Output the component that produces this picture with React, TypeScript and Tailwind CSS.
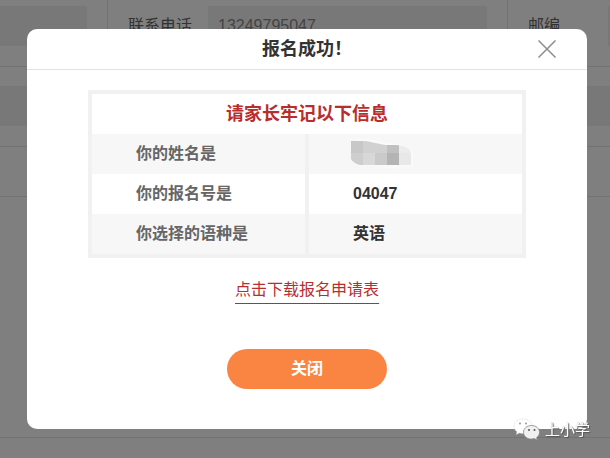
import { useState } from "react";

type Row = {
  label: string;
  value?: string;
};

const rows: Row[] = [
  { label: "你的姓名是" },
  { label: "你的报名号是", value: "04047" },
  { label: "你选择的语种是", value: "英语" },
];

// pixelated block that hides the name
const HiddenName: React.FC = () => (
  <svg
    width="66"
    height="32"
    viewBox="0 0 66 32"
    role="img"
    aria-label="姓名"
    className="block"
    shapeRendering="crispEdges"
  >
    <clipPath id="name-shape">
      <path d="M2 3H17L36 7H48C56 8 62 10 62 16V27H11Q4 25 2 21Z" />
    </clipPath>
    <path
      d="M6 1H18L42 5Q64 7 64 18V28L44 31L28 28H12Z"
      fill="#fafafa"
      shapeRendering="auto"
    />
    <g clipPath="url(#name-shape)">
      <path d="M2 3h12v12H2z" fill="#c8c8c8" />
      <path d="M14 3h24v12H14z" fill="#d1d1d1" />
      <path d="M38 3h12v12H38z" fill="#c0c0c0" />
      <path d="M50 3h12v12H50z" fill="#ececec" />
      <path d="M2 15h12v12H2z" fill="#cecece" />
      <path d="M14 15h12v12H14z" fill="#d8d8d8" />
      <path d="M26 15h12v12H26z" fill="#cacaca" />
      <path d="M38 15h12v12H38z" fill="#b4b4b4" />
      <path d="M50 15h12v12H50z" fill="#e8e8e8" />
    </g>
  </svg>
);

const Watermark: React.FC = () => (
  <div className="pointer-events-none fixed right-5 bottom-4 flex items-center gap-1">
    <svg width="28" height="24" viewBox="0 0 28 24" aria-hidden="true">
      <path
        d="M10 1C4.500 1 1 4.200 1 8.200c0 2.300 1.200 4.200 3 5.500l-.8 2.800 3.200-1.600c1.200.4 2.400.5 3.600.5 5 0 9-3.200 9-7.200S15 1 10 1z"
        fill="#fff"
        stroke="#ccc"
        strokeWidth="0.8"
        strokeDasharray="1 1.500"
      />
      <path
        d="M18.500 7.500c-4.700 0-8 3-8 6.800s3.300 6.800 8 6.800c1 0 2-.2 2.900-.5l2.900 1.500-.7-2.500c1.800-1.300 2.900-3.100 2.900-5.300 0-3.800-3.300-6.800-8-6.800z"
        fill="#f0f0f0"
        stroke="#888"
        strokeWidth="0.8"
      />
      <circle cx="7" cy="5.500" r="1" fill="#999" />
      <circle cx="13" cy="5.500" r="1" fill="#999" />
      <circle cx="16" cy="12" r="1" fill="#555" />
      <circle cx="21.500" cy="12" r="1" fill="#555" />
    </svg>
    <span className="text-[15px] leading-5 text-white [text-shadow:1px_1px_1px_#555,0_0_1px_#888]">
      上小学
    </span>
  </div>
);

const App: React.FC = () => {
  const [open, setOpen] = useState(true);

  return (
    <div className="flex min-h-screen flex-col overflow-hidden bg-white font-['Liberation_Sans','Noto_Sans_CJK_SC',sans-serif] text-base text-[#333]">
      <div className="grid grid-cols-[108px_1fr_102px] border-b border-[#e4e4e4] text-[#666]">
        <div className="border-r border-[#e4e4e4] pt-1.5 pr-5 pb-5">
          <input
            aria-label="联系人"
            readOnly
            className="block h-10 w-full bg-[#f1f1f1]"
          />
        </div>
        <div className="flex border-r border-[#e4e4e4] pt-1.5 pr-5 pb-5 pl-5">
          <label htmlFor="phone" className="w-20 shrink-0 leading-10">
            联系电话
          </label>
          <input
            id="phone"
            readOnly
            defaultValue="13249795047"
            className="block h-10 w-full min-w-0 bg-[#f1f1f1] px-2.5 text-[#888]"
          />
        </div>
        <div className="flex overflow-hidden pt-1.5 pl-5">
          <label htmlFor="zip" className="w-20 shrink-0 leading-10">
            邮编
          </label>
          <input id="zip" readOnly className="block h-10 min-w-0 flex-1 bg-[#f1f1f1]" />
        </div>
      </div>
      <div className="border-b border-[#e4e4e4] pt-[19px] pb-5">
        <input
          aria-label="地址"
          readOnly
          className="block h-10 w-full bg-[#f1f1f1]"
        />
      </div>
      <div className="h-[50px] border-b border-[#e4e4e4]" />
      <div className="flex-1 border-b border-[#e4e4e4]" />
      <div className="h-5" />

      {open && (
        <div className="fixed inset-0 flex items-center justify-center bg-black/50 pl-1">
          <div
            role="dialog"
            aria-labelledby="dialog-title"
            className="w-full max-w-[560px] rounded-[10px] bg-white"
          >
            <div className="grid grid-cols-[80px_1fr_80px] items-center border-b border-[#e2e2e2]">
              <h1
                id="dialog-title"
                className="col-start-2 text-center text-lg leading-10 font-bold"
              >
                报名成功！
              </h1>
              <button
                type="button"
                aria-label="关闭窗口"
                onClick={() => setOpen(false)}
                className="justify-self-center"
              >
                <svg width="20" height="20" viewBox="0 0 20 20" className="block">
                  <path
                    d="M1.500 1.500L18.500 18.500M18.500 1.500L1.500 18.500"
                    stroke="#8c8c8c"
                    strokeWidth="1.500"
                    fill="none"
                  />
                </svg>
              </button>
            </div>

            <div className="flex flex-col items-center px-[61px] pt-5 pb-10">
              <table className="w-full table-fixed border-separate border-spacing-0 border-4 border-[#f1f1f1] text-left">
                <colgroup>
                  <col className="w-[217px]" />
                  <col />
                </colgroup>
                <thead>
                  <tr>
                    <th
                      colSpan={2}
                      className="h-10 p-0 text-center text-lg leading-10 font-bold text-[#b92d2d]"
                    >
                      请家长牢记以下信息
                    </th>
                  </tr>
                </thead>
                <tbody>
                  {rows.map((row) => (
                    <tr key={row.label} className="odd:bg-[#f7f7f7]">
                      <th className="h-10 border-r-4 border-[#f1f1f1] p-0 pl-11 leading-10 font-bold text-[#666]">
                        {row.label}
                      </th>
                      {row.value ? (
                        <td className="h-10 p-0 pl-11 leading-10 font-bold">
                          {row.value}
                        </td>
                      ) : (
                        <td className="h-10 p-0 pl-10">
                          <HiddenName />
                        </td>
                      )}
                    </tr>
                  ))}
                </tbody>
              </table>

              <a
                href="#download"
                className="mt-[19px] border-b border-[#b92d2d] leading-[26px] text-[#b92d2d]"
              >
                点击下载报名申请表
              </a>

              <button
                type="button"
                onClick={() => setOpen(false)}
                className="mt-[45px] h-10 w-40 rounded-full bg-[#fa8543] font-bold text-white"
              >
                关闭
              </button>
            </div>
          </div>
        </div>
      )}

      <Watermark />
    </div>
  );
};

export default App;
